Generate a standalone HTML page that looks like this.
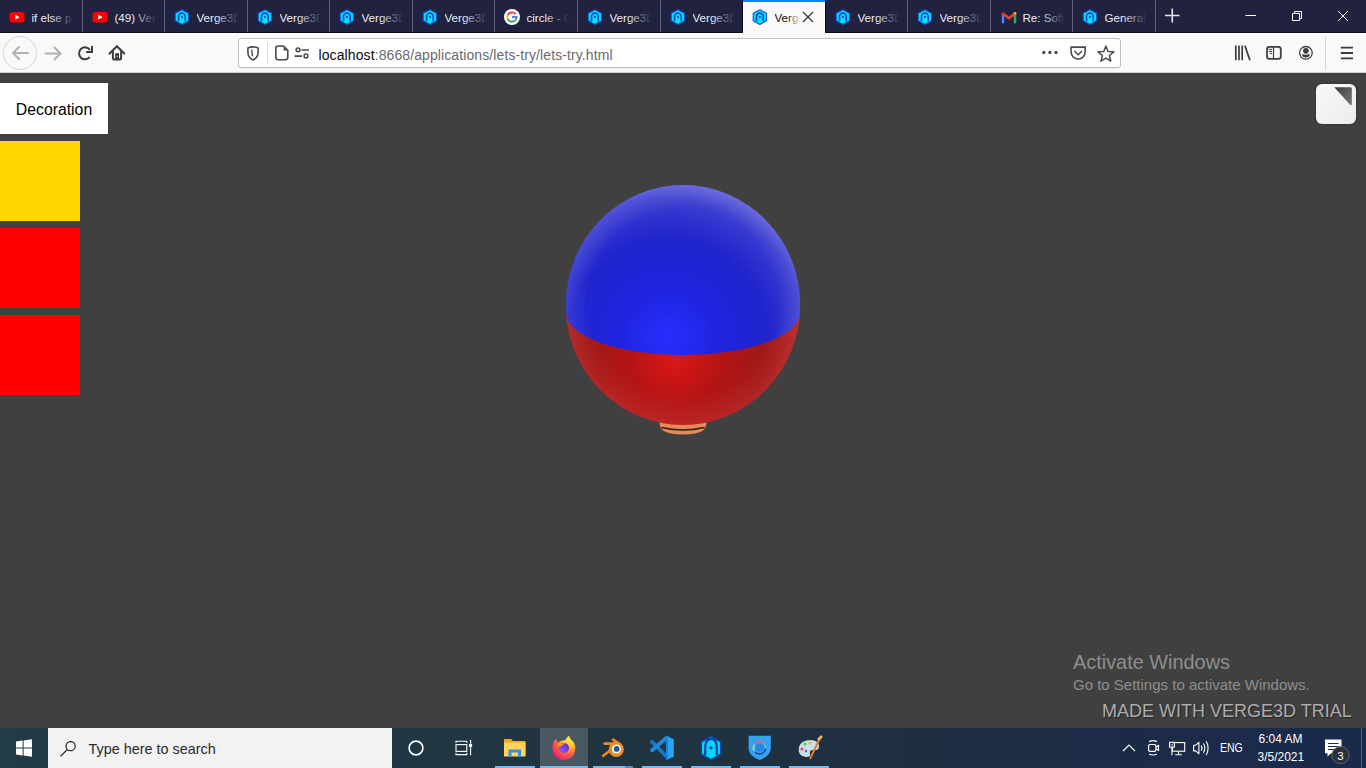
<!DOCTYPE html>
<html><head><meta charset="utf-8">
<style>
*{margin:0;padding:0;box-sizing:border-box}
html,body{width:1366px;height:768px;overflow:hidden;background:#404040;font-family:"Liberation Sans",sans-serif}
#tabs{position:absolute;left:0;top:0;width:1366px;height:33px;background:#20223f}
#tabs::after{content:"";position:absolute;left:0;right:0;top:32px;height:1px;background:#0b0b1a}
.tab{position:absolute;top:0;height:32px;color:#eeeef4;font-size:11.6px}
.sep{position:absolute;top:0;width:1px;height:32px;background:#5e6078}
.tab .ico{position:absolute;left:9px;top:9px;width:16px;height:16px;overflow:visible}
.tab .t{position:absolute;left:31.5px;top:10px;white-space:nowrap;overflow:hidden;width:42px;line-height:16px}
.tab .t::after{content:"";position:absolute;right:0;top:0;width:24px;height:16px;background:linear-gradient(to right,rgba(32,34,63,0),#20223f)}
.tab.active{background:#f9f9fa;color:#0c0c0d;height:34px;z-index:2}
.tab.active::before{content:"";position:absolute;left:0;top:0;right:0;height:2px;background:#0a84ff}
.tab.active .t{width:26px}
.tab.active .t::after{width:14px;background:linear-gradient(to right,rgba(249,249,250,0),#f9f9fa)}
.tab .x{position:absolute;left:59px;top:11px;width:12px;height:12px}
#toolbar{position:absolute;left:0;top:33px;width:1366px;height:40px;background:#f9f9fa;border-top:1px solid #fff}
#toolbar::after{content:"";position:absolute;left:0;right:0;bottom:0;height:1px;background:#d0d0d4}
.ic{position:absolute}
#url{position:absolute;left:238px;top:38px;width:883px;height:30px;background:#fff;border:1px solid #bebec3;border-radius:3px;box-shadow:0 1px 1px rgba(0,0,0,.06)}
#urltext{position:absolute;left:79.5px;top:7.5px;font-size:14px;letter-spacing:0.1px;line-height:16px;color:#6a6a6f;white-space:nowrap}
#urltext b{font-weight:normal;color:#0c0c0d}
#content{position:absolute;left:0;top:73px;width:1366px;height:655px;background:#404040;overflow:hidden}
#taskbar{position:absolute;left:0;top:728px;width:1366px;height:40px;background:linear-gradient(to right,#213b47 0%,#20343f 45%,#1e2f42 65%,#1b2b48 85%,#1a2a4b 100%)}
.deco{position:absolute;left:0;top:10px;width:108px;height:51px;background:#fff;color:#000;font-size:15.8px;line-height:53px;overflow:hidden;text-align:center;padding-left:0}
.sq{position:absolute;left:0;width:80px;height:80px}
#fs{position:absolute;left:1316px;top:10.7px;width:40px;height:40px;border-radius:6px;background:linear-gradient(135deg,#f8f8f8,#ececec);box-shadow:0 0 3px rgba(0,0,0,.35)}
.wm1{position:absolute;left:1073px;top:578px;font-size:19.9px;color:#8e8e8e;white-space:nowrap}
.wm2{position:absolute;left:1073px;top:603px;font-size:15px;color:#8e8e8e;white-space:nowrap}
.trial{position:absolute;left:1102px;top:627.8px;font-size:18px;color:#adadad;white-space:nowrap;text-shadow:1px 1px 1px #222}
#search{position:absolute;left:48px;top:728px;width:344px;height:40px;background:#f2f2f2}
#search .t{position:absolute;left:40.5px;top:12px;font-size:14.4px;color:#2a2a2a;line-height:18px}
.tb{position:absolute;top:728px;height:40px}
.tray{position:absolute;color:#fff;font-size:12px;white-space:nowrap}
</style></head><body>
<svg width="0" height="0" style="position:absolute">
<defs>
<symbol id="i-yt" viewBox="0 0 16 16"><rect x="0.5" y="3" width="15" height="10.5" rx="3" fill="#ff0000"/><path d="M6.3 5.8 L10.6 8.2 L6.3 10.6Z" fill="#fff"/></symbol>
<symbol id="i-v3d" viewBox="0 0 16 16"><path d="M7.9 0.7 L14.5 4.3 V11.7 L7.9 15.4 L1.2 11.7 V4.3Z" fill="#00e4fc" stroke="#0a50d0" stroke-width="1.1" stroke-linejoin="round"/><path d="M4.5 12.3 V7.4 A3.35 3.35 0 0 1 11.2 7.4 V12.3" fill="none" stroke="#0a48c8" stroke-width="1.7"/><circle cx="7.9" cy="7.9" r="1.05" fill="#0a3cc0"/></symbol>
<symbol id="i-g" viewBox="0 0 16 16" overflow="visible"><circle cx="8" cy="8" r="8" fill="#fff"/><path d="M11.6 5.2 A4.6 4.6 0 0 0 3.6 6.5" fill="none" stroke="#ea4335" stroke-width="1.9"/><path d="M3.6 6.5 A4.6 4.6 0 0 0 3.6 9.5" fill="none" stroke="#fbbc05" stroke-width="1.9"/><path d="M3.6 9.5 A4.6 4.6 0 0 0 11.5 11" fill="none" stroke="#34a853" stroke-width="1.9"/><path d="M11.5 11 A4.6 4.6 0 0 0 12.6 8 H8" fill="none" stroke="#4285f4" stroke-width="1.9"/></symbol>
<symbol id="i-gm" viewBox="0 0 16 16" overflow="visible"><path d="M3 13.2 V5" stroke="#4285f4" stroke-width="2.5" fill="none" stroke-linecap="round"/><path d="M15 13.2 V5" stroke="#34a853" stroke-width="2.5" fill="none" stroke-linecap="round"/><path d="M3 4.4 L9 9.2 L15 4.4" stroke="#ea4335" stroke-width="2.6" fill="none" stroke-linejoin="round" stroke-linecap="round"/><circle cx="15" cy="4.3" r="1.3" fill="#fbbc04"/><circle cx="3" cy="4.3" r="1.3" fill="#c5221f"/></symbol>
</defs></svg>
<div id="tabs">
<div class="tab" style="left:0px;width:82px"><svg class="ico" width="16" height="16"><use href="#i-yt"/></svg><span class="t">if else p</span></div>
<div class="tab" style="left:83px;width:81px"><svg class="ico" width="16" height="16"><use href="#i-yt"/></svg><span class="t">(49) Ver</span></div>
<div class="tab" style="left:165px;width:82px"><svg class="ico" width="16" height="16"><use href="#i-v3d"/></svg><span class="t">Verge3D</span></div>
<div class="tab" style="left:248px;width:81px"><svg class="ico" width="16" height="16"><use href="#i-v3d"/></svg><span class="t">Verge3D</span></div>
<div class="tab" style="left:330px;width:82px"><svg class="ico" width="16" height="16"><use href="#i-v3d"/></svg><span class="t">Verge3D</span></div>
<div class="tab" style="left:413px;width:81px"><svg class="ico" width="16" height="16"><use href="#i-v3d"/></svg><span class="t">Verge3D</span></div>
<div class="tab" style="left:495px;width:82px"><svg class="ico" width="16" height="16"><use href="#i-g"/></svg><span class="t">circle - G</span></div>
<div class="tab" style="left:578px;width:82px"><svg class="ico" width="16" height="16"><use href="#i-v3d"/></svg><span class="t">Verge3D</span></div>
<div class="tab" style="left:661px;width:81px"><svg class="ico" width="16" height="16"><use href="#i-v3d"/></svg><span class="t">Verge3D</span></div>
<div class="tab active" style="left:743px;width:82px"><svg class="ico" width="16" height="16"><use href="#i-v3d"/></svg><span class="t">Verge3D</span><svg class="x" width="12" height="12"><path d="M1 1 L11 11 M11 1 L1 11" stroke="#3a3a3a" stroke-width="1.4"/></svg></div>
<div class="tab" style="left:826px;width:81px"><svg class="ico" width="16" height="16"><use href="#i-v3d"/></svg><span class="t">Verge3D</span></div>
<div class="tab" style="left:908px;width:82px"><svg class="ico" width="16" height="16"><use href="#i-v3d"/></svg><span class="t">Verge3D</span></div>
<div class="tab" style="left:991px;width:81px"><svg class="ico" width="16" height="16"><use href="#i-gm"/></svg><span class="t">Re: Soft</span></div>
<div class="tab" style="left:1073px;width:82px"><svg class="ico" width="16" height="16"><use href="#i-v3d"/></svg><span class="t">General</span></div>
<div class="sep" style="left:82px"></div>
<div class="sep" style="left:164px"></div>
<div class="sep" style="left:247px"></div>
<div class="sep" style="left:329px"></div>
<div class="sep" style="left:412px"></div>
<div class="sep" style="left:494px"></div>
<div class="sep" style="left:577px"></div>
<div class="sep" style="left:660px"></div>
<div style="position:absolute;left:742px;top:0;width:1px;height:33px;background:#0a0a20;z-index:3"></div>
<div style="position:absolute;left:825px;top:0;width:1px;height:33px;background:#0a0a20;z-index:3"></div>
<div class="sep" style="left:907px"></div>
<div class="sep" style="left:990px"></div>
<div class="sep" style="left:1072px"></div>
<div class="sep" style="left:1155px"></div>
<div style="position:absolute;left:743px;top:2px;width:1px;height:31px;background:#fff;z-index:3"></div>
<div style="position:absolute;left:824px;top:2px;width:1px;height:31px;background:#fff;z-index:3"></div>

<!-- window controls -->
<svg class="ic" style="left:1155px;top:0;" width="211" height="32">
 <path d="M10 15.5 H24.5 M17.25 8.5 V22.5" stroke="#e6e6ee" stroke-width="1.6"/>
 <path d="M90.5 15.5 H101" stroke="#fff" stroke-width="1"/>
 <path d="M137.5 13.5 H144.5 V20.5 H137.5Z M139.5 13.5 V11.5 H146.5 V18.5 H144.5" stroke="#fff" stroke-width="1" fill="none"/>
 <path d="M183 11 L193 21 M193 11 L183 21" stroke="#fff" stroke-width="1"/>
</svg>
</div>

<div id="toolbar"></div>
<!-- nav icons -->
<svg class="ic" style="left:0;top:33px" width="140" height="40">
 <circle cx="20" cy="20" r="16.5" fill="none" stroke="#d4d4d6" stroke-width="1"/>
 <path d="M28 20 H13.5 M19 14 L13 20 L19 26" fill="none" stroke="#b1b1b3" stroke-width="2" stroke-linecap="round" stroke-linejoin="round"/>
 <path d="M45.5 20.5 H60 M54.5 14.5 L60.5 20.5 L54.5 26.5" fill="none" stroke="#b1b1b3" stroke-width="2" stroke-linecap="round" stroke-linejoin="round"/>
 <path d="M89.9 16.8 A6 6 0 1 0 89.7 24.2" fill="none" stroke="#3d3d40" stroke-width="2"/>
 <path d="M92 13.1 V19 H86.2" fill="none" stroke="#3d3d40" stroke-width="2"/>
 <path d="M109.6 20.6 L116.9 13.2 L124.2 20.6" fill="none" stroke="#3d3d40" stroke-width="2.1" stroke-linejoin="round" stroke-linecap="round"/>
 <path d="M112.9 18.2 V24.8 Q112.9 26.6 114.7 26.6 H119.3 Q121.1 26.6 121.1 24.8 V18.2" fill="none" stroke="#3d3d40" stroke-width="2"/>
 <rect x="115.2" y="20.2" width="3.8" height="6.4" fill="#3d3d40"/>
 <circle cx="117.4" cy="23.3" r="0.6" fill="#ddd"/>
</svg>

<div id="url">
 <svg class="ic" style="left:0;top:0" width="80" height="30">
  <path d="M14 7.9 Q11.2 7.9 8.9 9 V13.2 Q8.9 18.6 14 20.9 Q19.1 18.6 19.1 13.2 V9 Q16.8 7.9 14 7.9Z" fill="none" stroke="#4a4a4f" stroke-width="1.6"/>
  <path d="M12.9 10.6 Q12.8 14 13.5 17.2" fill="none" stroke="#4a4a4f" stroke-width="1.4"/>
  <path d="M28.5 3 V24.5" stroke="#dcdcde" stroke-width="1"/>
  <path d="M39.3 7 H44.5 L48.8 11.3 V18.3 Q48.8 20.8 46.3 20.8 H39.3 Q36.8 20.8 36.8 18.3 V9.5 Q36.8 7 39.3 7Z" fill="none" stroke="#4a4a4f" stroke-width="1.6" stroke-linejoin="round"/>
  <path d="M44.6 7.6 V11.4 H48.4Z" fill="#4a4a4f"/>
  <circle cx="59" cy="10.8" r="1.9" fill="none" stroke="#4a4a4f" stroke-width="1.5"/>
  <circle cx="67" cy="17" r="1.9" fill="none" stroke="#4a4a4f" stroke-width="1.5"/>
  <path d="M62.5 11 H70 M55.5 17.2 H63" stroke="#4a4a4f" stroke-width="1.7"/>
 </svg>
 <div id="urltext"><b>localhost</b>:8668/applications/lets-try/lets-try.html</div>
 <svg class="ic" style="left:795px;top:0" width="88" height="30">
  <circle cx="9.8" cy="13.5" r="1.65" fill="#4a4a4f"/><circle cx="15.9" cy="13.5" r="1.65" fill="#4a4a4f"/><circle cx="22" cy="13.5" r="1.65" fill="#4a4a4f"/>
  <path d="M37.1 8.1 H51.2 V13 A7.05 7 0 0 1 37.1 13Z" fill="none" stroke="#4a4a4f" stroke-width="1.6"/>
  <path d="M40.3 12 L44.15 15.8 L48 12" fill="none" stroke="#4a4a4f" stroke-width="1.5"/>
  <path d="M71.90 7.10 L74.07 12.41 L79.79 12.84 L75.42 16.54 L76.78 22.11 L71.90 19.10 L67.02 22.11 L68.38 16.54 L64.01 12.84 L69.73 12.41Z" fill="none" stroke="#4a4a4f" stroke-width="1.5" stroke-linejoin="round"/>
 </svg>
</div>

<svg class="ic" style="left:1220px;top:33px" width="146" height="40">
 <path d="M15.8 12.6 V27.2 M19 12.6 V27.2 M22.2 12.6 V27.2 M24.9 12.6 L29.9 27.2" stroke="#3d3d40" stroke-width="1.7"/>
 <rect x="47" y="13.8" width="13.8" height="12.1" rx="2.4" fill="none" stroke="#3d3d40" stroke-width="1.75"/>
 <path d="M53.5 13.8 V25.9" stroke="#3d3d40" stroke-width="1.2"/>
 <path d="M49.2 16.4 H51.6 M49.2 18.5 H51.6 M50.3 20.5 H51.6" stroke="#3d3d40" stroke-width="1" stroke-linecap="round"/>
 <circle cx="85.9" cy="19.85" r="6.35" fill="none" stroke="#3d3d40" stroke-width="1.3"/>
 <circle cx="85.9" cy="17.85" r="2.8" fill="#3d3d40"/>
 <path d="M81.9 21 Q85.9 22.6 89.9 21 Q89.5 24.6 85.9 24.6 Q82.3 24.6 81.9 21Z" fill="#3d3d40"/>
 <path d="M105.5 3 V37" stroke="#d4d4d6" stroke-width="1"/>
 <path d="M120.8 14.6 H133 M120.8 20 H133 M120.8 25.4 H133" stroke="#3d3d40" stroke-width="1.8"/>
</svg>

<div id="content">
  <div class="deco">Decoration</div>
  <div class="sq" style="top:68px;background:#ffd600"></div>
  <div class="sq" style="top:155px;background:#ff0000"></div>
  <div class="sq" style="top:242px;background:#ff0000"></div>
  <div id="fs"><svg width="40" height="40" style="position:absolute;left:0;top:0"><defs><linearGradient id="fsg" x1="0" y1="0" x2="1" y2="1"><stop offset="0" stop-color="#3e3e3e"/><stop offset="1" stop-color="#787878"/></linearGradient></defs><path d="M18.3 3.3 H34.5 Q35.8 3.3 35.8 4.6 V20.6 Q35.3 21.6 34.3 20.9Z" fill="url(#fsg)"/></svg></div>
  <svg style="position:absolute;left:540px;top:87px" width="290" height="290">
   <defs>
    <radialGradient id="gb" gradientUnits="userSpaceOnUse" cx="128" cy="178" r="160">
     <stop offset="0" stop-color="#2a2eff"/><stop offset="0.3" stop-color="#2024e0"/><stop offset="0.62" stop-color="#2024cc"/><stop offset="0.86" stop-color="#3b3dd0"/><stop offset="1" stop-color="#6262dc"/>
    </radialGradient>
    <radialGradient id="gr" gradientUnits="userSpaceOnUse" cx="135" cy="200" r="150">
     <stop offset="0" stop-color="#dc1616"/><stop offset="0.3" stop-color="#b41414"/><stop offset="0.6" stop-color="#9e1818"/><stop offset="0.85" stop-color="#ae2222"/><stop offset="1" stop-color="#cc3838"/>
    </radialGradient>
    <radialGradient id="rim" gradientUnits="userSpaceOnUse" cx="143" cy="145" r="120">
     <stop offset="0" stop-color="#fff" stop-opacity="0"/><stop offset="0.8" stop-color="#fff" stop-opacity="0"/><stop offset="1" stop-color="#d0d0ff" stop-opacity="0.14"/>
    </radialGradient>
    <radialGradient id="rimr" gradientUnits="userSpaceOnUse" cx="143" cy="145" r="120">
     <stop offset="0" stop-color="#ff6060" stop-opacity="0"/><stop offset="0.75" stop-color="#ff6060" stop-opacity="0"/><stop offset="1" stop-color="#ff7070" stop-opacity="0.18"/>
    </radialGradient>
    <clipPath id="blueclip"><path d="M0 0 H290 V154 H260 A117 42 0 0 1 26 154 H0Z"/></clipPath>
    <clipPath id="redclip"><path d="M26 153 A117 42 0 0 0 260 153 L290 153 L290 290 L0 290 L0 153Z"/></clipPath>
   </defs>
   <path d="M119 258 H167 Q167 267 163 270.5 Q157 274.5 143 274.5 Q129 274.5 123 270.5 Q119 267 119 258Z" fill="#e8895a"/>
   <path d="M121.5 267.5 Q143 272.5 164.5 267.5" stroke="#3a1e10" stroke-width="1.3" fill="none"/>
   <ellipse cx="143" cy="145" rx="117.2" ry="120" fill="url(#gb)" clip-path="url(#blueclip)"/>
   <ellipse cx="143" cy="145" rx="117.2" ry="120" fill="url(#rim)" clip-path="url(#blueclip)"/>
   <ellipse cx="143" cy="145" rx="117.2" ry="120" fill="url(#gr)" clip-path="url(#redclip)"/>
   <ellipse cx="143" cy="145" rx="117.2" ry="120" fill="url(#rimr)" clip-path="url(#redclip)"/>
  </svg>
  <div class="wm1">Activate Windows</div>
  <div class="wm2">Go to Settings to activate Windows.</div>
  <div class="trial">MADE WITH VERGE3D TRIAL</div>
</div>

<div id="taskbar"></div>
<div id="search"><svg width="30" height="39" style="position:absolute;left:0;top:1px"><circle cx="22.6" cy="17.2" r="4.6" fill="none" stroke="#111" stroke-width="1.1"/><path d="M19.4 20.4 L12.5 27.3" stroke="#111" stroke-width="1.2"/></svg><div class="t">Type here to search</div></div>
<svg class="ic" style="left:0;top:728px" width="1366" height="40">
 <!-- windows logo -->
 <path d="M16 13.5 L22.6 12.6 V19.6 H16Z M23.6 12.5 L32 11.3 V19.6 H23.6Z M16 20.6 H22.6 V27.5 L16 26.6Z M23.6 20.6 H32 V28.8 L23.6 27.6Z" fill="#fff"/>
 <!-- cortana -->
 <circle cx="416" cy="20" r="6.9" fill="none" stroke="#fff" stroke-width="1.6"/>
 <!-- task view -->
 <path d="M456 15 V13.2 H466.8 V15 M456 24.8 V26.6 H466.8 V24.8" fill="none" stroke="#fff" stroke-width="1.1"/>
 <rect x="456" y="16.6" width="10.8" height="6.8" fill="none" stroke="#fff" stroke-width="1.1"/>
 <path d="M470.6 11.8 V15.6 M470.6 19.6 V27.2" stroke="#fff" stroke-width="1.1"/>
 <rect x="469.1" y="15.8" width="3" height="3.4" fill="#fff"/>
 <!-- explorer -->
 <path d="M504 11 H511 L513 13 H525.5 V27.8 H504Z" fill="#e8a828"/>
 <path d="M504 14.5 H525.5 V28.5 H504Z" fill="#ffd35c"/>
 <path d="M508.5 29 V21.5 H521 V29 H518 V24.5 H511.5 V29Z" fill="#3a8ee0"/>
 <rect x="495" y="38" width="40" height="2" fill="#76b9ed"/>
 <!-- firefox active -->
 <rect x="540" y="0" width="48" height="40" fill="#4a5961"/>
 <rect x="540" y="38" width="48" height="2" fill="#76b9ed"/>
 <defs>
  <radialGradient id="ffg" cx="0.75" cy="0.15" r="1.0"><stop offset="0" stop-color="#fff44f"/><stop offset="0.3" stop-color="#ffbd2e"/><stop offset="0.55" stop-color="#ff7139"/><stop offset="0.8" stop-color="#f5366a"/><stop offset="1" stop-color="#e31587"/></radialGradient>
  <radialGradient id="ffp" cx="0.35" cy="0.7" r="0.8"><stop offset="0" stop-color="#9059ff"/><stop offset="1" stop-color="#5b2bd1"/></radialGradient>
 </defs>
 <path d="M553.5 13.5 Q555 11 556.5 11.5 Q557 14 558 14.5 Q561 12 565 12.3 Q568 8 569 7.8 Q570 11 572 12.5 Q576 16 575.2 21 A11.3 11.3 0 0 1 552.6 20.5 Q552.4 16 553.5 13.5Z" fill="url(#ffg)"/>
 <circle cx="564" cy="20" r="5" fill="url(#ffp)"/>
 <path d="M556.5 17 Q560 14.5 566 15.5 Q562 16.5 560.5 19 Q558 18.5 556.5 17Z" fill="#ff8a2a"/>
 <!-- blender -->
 <rect x="593" y="38" width="32" height="2" fill="#76b9ed"/>
 <rect x="625" y="38" width="8" height="2" fill="#5a8ab5"/>
 <path d="M604.8 15.6 H614.5" stroke="#f08a1c" stroke-width="2.8" stroke-linecap="round"/>
 <path d="M613 11.6 L620 16" stroke="#f08a1c" stroke-width="2.6" stroke-linecap="round"/>
 <path d="M603.2 27.8 L611.5 21.5" stroke="#f08a1c" stroke-width="2.6" stroke-linecap="round"/>
 <circle cx="616.3" cy="21.3" r="7.6" fill="#f08a1c"/>
 <circle cx="616.5" cy="21" r="4.6" fill="#fff"/>
 <circle cx="616.7" cy="20.9" r="2.9" fill="#265787"/>
 <!-- vscode -->
 <rect x="642" y="38" width="40" height="2" fill="#76b9ed"/>
 <path d="M652 13.8 L667 29" stroke="#1578c8" stroke-width="3.8" stroke-linecap="round"/>
 <path d="M652 22.3 L667 9.5" stroke="#1a8ae0" stroke-width="3.8" stroke-linecap="round"/>
 <path d="M666 7.8 L673.8 11.2 V28.8 L666 32.2Z" fill="#25a5f2"/>
 <path d="M666 7.8 L668 8.7 V31.3 L666 32.2Z" fill="#1784d4"/>
 <!-- verge3d -->
 <rect x="691" y="38" width="40" height="2" fill="#76b9ed"/>
 <path d="M711 8.4 L720.6 13.9 V26.1 L711 31.6 L701.4 26.1 V13.9Z" fill="#00d6f6" stroke="#0a44b4" stroke-width="1.3" stroke-linejoin="round"/>
 <path d="M705.2 27 V20 Q705.2 10.8 711 10.8 Q716.8 10.8 716.8 20 V27" fill="none" stroke="#0a3aa8" stroke-width="2.2"/>
 <circle cx="711" cy="19.8" r="1.6" fill="#0a3aa8"/>
 <!-- hotspot -->
 <rect x="740" y="38" width="40" height="2" fill="#76b9ed"/>
 <path d="M748.6 7.8 H770.8 V20 Q770.8 28 759.7 32 Q748.6 28 748.6 20Z" fill="#34a2f2"/>
 <circle cx="759.7" cy="19.5" r="4.2" fill="#1f8be6"/>
 <path d="M754.5 16.5 A6 6 0 0 1 764.5 15.5" fill="none" stroke="#e2687a" stroke-width="1.3"/>
 <path d="M754 22.5 A6 6 0 0 1 754.5 16.5" fill="none" stroke="#e2d85a" stroke-width="1.3"/>
 <path d="M765.5 20.5 A6 6 0 0 1 755 24" fill="none" stroke="#1a4aa0" stroke-width="1.5"/>
 <path d="M764.5 15.5 A6 6 0 0 1 765.5 20.5" fill="none" stroke="#5ac8a0" stroke-width="1.3"/>
 <!-- paint -->
 <rect x="789" y="38" width="40" height="2" fill="#76b9ed"/>
 <path d="M799 19 Q801 12 811 12 Q820 13 819 19 Q818 23 813 22 Q809 22 810 26 Q811 29 806 29 Q797 28 799 19Z" fill="#c8e0ee"/>
 <circle cx="802" cy="21" r="1.6" fill="#e84a4a"/><circle cx="805" cy="16" r="1.6" fill="#5ac85a"/><circle cx="810" cy="15" r="1.6" fill="#f0b030"/><circle cx="806" cy="23" r="1.2" fill="#3a6ab0"/>
 <path d="M810 31 L820 10" stroke="#e07a28" stroke-width="2"/>
 <path d="M818 12 L822 8" stroke="#f0c060" stroke-width="2.5"/>
 <!-- tray -->
 <path d="M1123 23 L1129 17 L1135 23" fill="none" stroke="#fff" stroke-width="1.2"/>
 <path d="M1149.2 13.6 Q1153 11.6 1156.8 13.6 M1149.2 26 Q1153 28 1156.8 26" fill="none" stroke="#fff" stroke-width="1.2"/>
 <rect x="1148.6" y="16.5" width="7.3" height="6.8" rx="1.6" fill="none" stroke="#fff" stroke-width="1.2"/>
 <path d="M1156 18.9 L1158.5 17.6 V22.2 L1156 20.9" fill="none" stroke="#fff" stroke-width="1.2"/>
 <rect x="1172.5" y="14.6" width="12.2" height="8.6" fill="none" stroke="#fff" stroke-width="1.1"/>
 <path d="M1178.6 23.2 V26.6 M1175.2 26.8 H1182" stroke="#fff" stroke-width="1.1" fill="none"/>
 <rect x="1169.6" y="14.3" width="4.8" height="4.8" fill="#1b2b49" stroke="#fff" stroke-width="1.1"/>
 <path d="M1170.9 16.4 L1171.9 17.4 L1173.2 15.6" stroke="#fff" stroke-width="0.8" fill="none"/>
 <path d="M1171.9 19.1 V27.2" stroke="#fff" stroke-width="1.1"/>
 <path d="M1193.6 17.2 H1195.8 L1198.9 14.4 V25.8 L1195.8 22.9 H1193.6Z" fill="none" stroke="#fff" stroke-width="1.1" stroke-linejoin="round"/>
 <path d="M1201.2 17.6 Q1202.9 20.1 1201.2 22.6 M1203.4 15.5 Q1206.4 20.1 1203.4 24.8 M1206.2 13.2 Q1210 20.1 1206.2 27.1" fill="none" stroke="#fff" stroke-width="1.1"/>
 <!-- notification -->
 <path d="M1325 11.6 H1341.5 V25.3 H1331 L1327.5 28.5 V25.3 H1325Z" fill="#fff"/>
 <path d="M1328 15.5 H1338.5 M1328 18.5 H1338.5 M1328 21.5 H1336" stroke="#1a2b4b" stroke-width="1"/>
 <circle cx="1340.5" cy="27.2" r="8.6" fill="#2a2f3a" stroke="#6a6f78" stroke-width="0.8"/>
 <path d="M1361.5 0 V40" stroke="#51607a" stroke-width="1"/>
</svg>
<div class="tray" style="left:1219.5px;top:741px;font-size:12.5px;transform:scaleX(0.84);transform-origin:0 0">ENG</div>
<div class="tray" style="left:1258.5px;top:732.3px">6:04 AM</div>
<div class="tray" style="left:1257.5px;top:750px">3/5/2021</div>
<div class="tray" style="left:1337.3px;top:749.5px;font-size:11.5px">3</div>
</body></html>
